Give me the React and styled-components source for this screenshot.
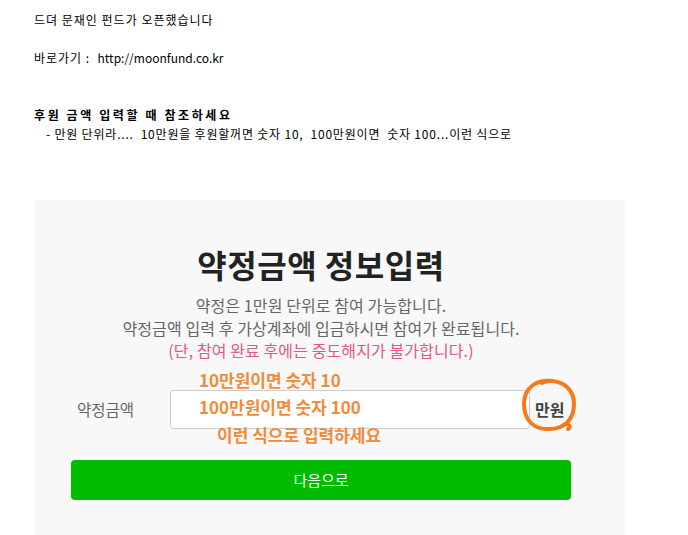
import React from "react";
import styled, { createGlobalStyle } from "styled-components";

const Global = createGlobalStyle`
  html, body { margin: 0; padding: 0; background: #fff; }
  body { font-family: "Noto Sans CJK KR", "Noto Sans", sans-serif; }
`;

const Page = styled.div`
  padding: 10px 0 0 34px;
`;

const Notes = styled.div`
  font-size: 12px;
  line-height: 19px;
  color: #000;
  font-family: "Noto Sans CJK KR", sans-serif;
`;

const Line = styled.div`
  min-height: 19px;
  font-weight: ${(p) => (p.$bold ? 700 : 400)};
  padding-left: ${(p) => p.$indent || 0}px;
  letter-spacing: ${(p) => p.$spacing ?? 1}px;
  white-space: pre;
`;

const Latin = styled.span`
  letter-spacing: 0;
`;

const Panel = styled.div`
  margin-top: 57px;
  width: 591px;
  box-sizing: border-box;
  background: #f8f8f8;
  padding: 44px 0 40px 37px;
`;

const Inner = styled.div`
  width: 500px;
  display: flex;
  flex-direction: column;
  align-items: stretch;
`;

const Title = styled.h2`
  margin: 0;
  text-align: center;
  font-size: 32px;
  line-height: 40px;
  font-weight: 700;
  color: #222;
  letter-spacing: 0.5px;
`;

const Desc = styled.p`
  margin: 10px 0 0;
  text-align: center;
  font-size: 16px;
  line-height: 22.5px;
  color: #666;
  letter-spacing: 0.1px;
`;

const Warn = styled.span`
  color: #e6577c;
`;

const Row = styled.div`
  position: relative;
  margin-top: 28px;
  display: flex;
  align-items: center;
  height: 39px;
`;

const Label = styled.div`
  width: 93px;
  padding-left: 6px;
  font-size: 15.5px;
  color: #666;
`;

const Input = styled.div`
  width: 360px;
  height: 39px;
  box-sizing: border-box;
  background: #fff;
  border: 1px solid #ccc;
  border-radius: 3px;
`;

const Unit = styled.div`
  margin-left: 5px;
  font-size: 16px;
  font-weight: 700;
  color: #444;
`;

const Note = styled.div`
  position: absolute;
  left: ${(p) => p.$x}px;
  top: ${(p) => p.$y}px;
  font-size: 17px;
  line-height: 20px;
  font-weight: 700;
  color: #f28a3a;
  white-space: nowrap;
`;

const Circle = styled.svg`
  position: absolute;
  left: 450px;
  top: -12px;
  overflow: visible;
`;

const Button = styled.button`
  margin-top: 31px;
  height: 40px;
  border: none;
  border-radius: 4px;
  background: #00bb00;
  color: #fff;
  font-family: "Noto Sans CJK KR", sans-serif;
  font-size: 15px;
  cursor: pointer;
`;

export default function App() {
  return (
    <>
      <Global />
      <Page>
        <Notes>
          <Line>드뎌 문재인 펀드가 오픈했습니다</Line>
          <Line />
          <Line>
            바로가기 :  <Latin>http://moonfund.co.kr</Latin>
          </Line>
          <Line />
          <Line />
          <Line $bold $spacing={2.6}>후원 금액 입력할 때 참조하세요</Line>
          <Line $indent={12} $spacing={0.8}>- 만원 단위라....  10만원을 후원할꺼면 숫자 10,  100만원이면  숫자 100...이런 식으로</Line>
        </Notes>
        <Panel>
          <Inner>
            <Title>약정금액 정보입력</Title>
            <Desc>
              약정은 1만원 단위로 참여 가능합니다.
              <br />
              약정금액 입력 후 가상계좌에 입금하시면 참여가 완료됩니다.
              <br />
              <Warn>(단, 참여 완료 후에는 중도해지가 불가합니다.)</Warn>
            </Desc>
            <Row>
              <Label>약정금액</Label>
              <Input />
              <Unit>만원</Unit>
              <Note $x={128} $y={-20}>10만원이면 숫자 10</Note>
              <Note $x={128} $y={7}>100만원이면 숫자 100</Note>
              <Note $x={146} $y={35}>이런 식으로 입력하세요</Note>
              <Circle width="56" height="54" viewBox="0 0 56 54">
                <path
                  d="M32 3 C15 1, 3 10, 3 26 C3 41, 12 52, 28 51 C44 51, 53 41, 53 26 C53 12, 43 3, 29 3 C26 3, 23 4, 21 5 M46 46 C49 47, 50 49, 47 51"
                  fill="none"
                  stroke="#f57a1e"
                  strokeWidth="4"
                  strokeLinecap="round"
                />
              </Circle>
            </Row>
            <Button>다음으로</Button>
          </Inner>
        </Panel>
      </Page>
    </>
  );
}
